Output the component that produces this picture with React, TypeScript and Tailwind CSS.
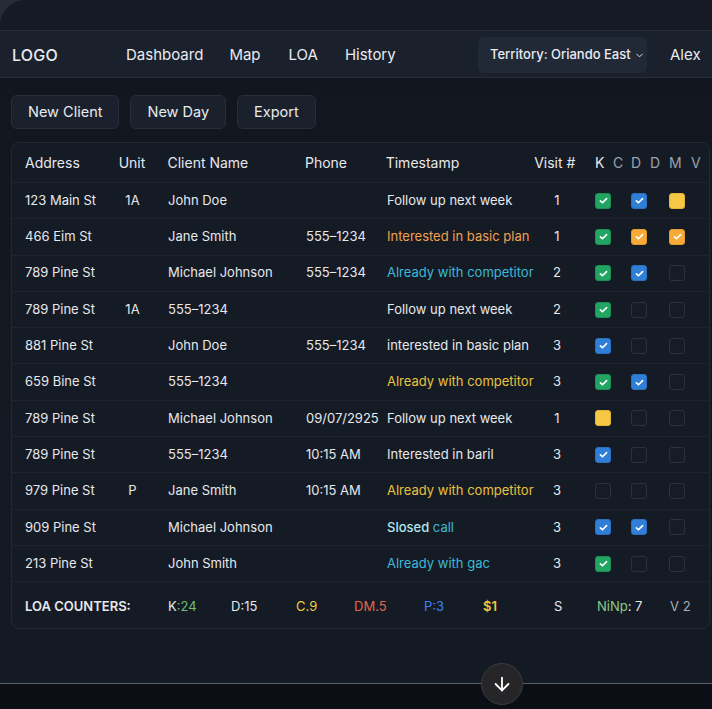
import { ArrowDown, ChevronDown } from 'lucide-react';

type Box = 'green' | 'blue' | 'orange' | 'yellowPlain' | 'none';

type Row = {
  address: string;
  unit?: string;
  name: string;
  phone?: string;
  note: React.ReactNode;
  visit: string;
  checks: [Box, Box, Box];
};

const white = 'text-[#e6e8ec]';

const ROWS: Row[] = [
  { address: '123 Main St', unit: '1A', name: 'John Doe', note: <span className={white}>Follow up next week</span>, visit: '1', checks: ['green', 'blue', 'yellowPlain'] },
  { address: '466 Eim St', name: 'Jane Smith', phone: '555–1234', note: <span className="text-[#f0a24e]">Interested in basic plan</span>, visit: '1', checks: ['green', 'orange', 'orange'] },
  { address: '789 Pine St', name: 'Michael Johnson', phone: '555–1234', note: <span className="text-[#3db9d6]">Already with competitor</span>, visit: '2', checks: ['green', 'blue', 'none'] },
  { address: '789 Pine St', unit: '1A', name: '555–1234', note: <span className={white}>Follow up next week</span>, visit: '2', checks: ['green', 'none', 'none'] },
  { address: '881 Pine St', name: 'John Doe', phone: '555–1234', note: <span className={white}>interested in basic plan</span>, visit: '3', checks: ['blue', 'none', 'none'] },
  { address: '659 Bine St', name: '555–1234', note: <span className="text-[#e8c23c]">Already with competitor</span>, visit: '3', checks: ['green', 'blue', 'none'] },
  { address: '789 Pine St', name: 'Michael Johnson', phone: '09/07/2925', note: <span className={white}>Follow up next week</span>, visit: '1', checks: ['yellowPlain', 'none', 'none'] },
  { address: '789 Pine St', name: '555–1234', phone: '10:15 AM', note: <span className={white}>Interested in baril</span>, visit: '3', checks: ['blue', 'none', 'none'] },
  { address: '979 Pine St', unit: 'P', name: 'Jane Smith', phone: '10:15 AM', note: <span className="text-[#e8c23c]">Already with competitor</span>, visit: '3', checks: ['none', 'none', 'none'] },
  {
    address: '909 Pine St',
    name: 'Michael Johnson',
    note: (
      <span>
        <span className="font-medium text-[#b4e6f1]">Slosed</span> <span className="text-[#3db9d6]">call</span>
      </span>
    ),
    visit: '3',
    checks: ['blue', 'blue', 'none'],
  },
  { address: '213 Pine St', name: 'John Smith', note: <span className="text-[#3db9d6]">Already with gac</span>, visit: '3', checks: ['green', 'none', 'none'] },
];

const BOX_STYLES: Record<Box, string> = {
  green: 'bg-[#22a462] border-[#1d8f55]',
  blue: 'bg-[#2f7ed8] border-[#2a6fc0]',
  yellowPlain: 'bg-[#f6c744] border-[#e2b437]',
  orange: 'bg-[#f6aa38] border-[#e39a2c]',
  none: 'bg-[#161c26] border-[#2b323e]',
};

function CheckBox({ kind }: { kind: Box }) {
  const checked = kind !== 'none' && kind !== 'yellowPlain';
  return (
    <span className={`flex h-[16px] w-[16px] items-center justify-center rounded-[3px] border ${BOX_STYLES[kind]}`}>
      {checked && (
        <svg viewBox="0 0 16 16" className="h-[11px] w-[11px]" fill="none" stroke="white" strokeWidth={2.4} strokeLinecap="round" strokeLinejoin="round">
          <path d="M3.5 8.5l3 2.8 6-6" />
        </svg>
      )}
    </span>
  );
}

function Checks({ checks }: { checks: [Box, Box, Box] }) {
  return (
    <div className="flex items-center pl-[17px]">
      <CheckBox kind={checks[0]} />
      <span className="w-[20px]" />
      <CheckBox kind={checks[1]} />
      <span className="w-[22px]" />
      <CheckBox kind={checks[2]} />
    </div>
  );
}

export default function App() {
  return (
    <div className="h-[709px] w-[712px] overflow-hidden bg-[#262c36] font-['Inter',sans-serif]">
      <div className="flex h-full flex-col rounded-tl-[26px] bg-[#131821]">
        <div className="h-[30px] shrink-0 rounded-tl-[26px] bg-[#151a24]" />

        {/* top bar */}
        <header className="flex h-[48px] shrink-0 items-center border-y border-[#262d3a] bg-[#1a212d] pt-[2px] text-[15px] text-[#e9ebef]">
          <div className="w-[126px] pl-[12px] text-[16px] font-medium tracking-[0.2px]">LOGO</div>
          <nav className="flex w-[352px] items-center">
            <a className="mr-[26px]">Dashboard</a>
            <a className="mr-[28px]">Map</a>
            <a className="mr-[27px]">LOA</a>
            <a>History</a>
          </nav>
          <div className="flex h-[36px] w-[169px] items-center rounded-md bg-[#212937] pl-[12px] text-[13px] font-medium">
            Territory: Oriando East
            <ChevronDown className="ml-[3px] h-[11px] w-[11px]" strokeWidth={2} />
          </div>
          <div className="ml-[23px]">Alex</div>
        </header>

        <div className="flex-1 bg-gradient-to-b from-[#12171f] to-[#141a24] px-[11px]">
          <div className="flex gap-[11px] pt-[17px]">
            {['New Client', 'New Day', 'Export'].map(label => (
              <button
                key={label}
                className="h-[34px] rounded-md border border-[#262e3b] bg-[#1a212c] px-[16px] text-[14.5px] text-[#e9ebef]"
              >
                {label}
              </button>
            ))}
          </div>

          <div className="mt-[13px] mr-[-9px] rounded-lg border border-[#212834] bg-[#151b25] text-[13px]">
            <div className="flex h-[39px] items-center whitespace-nowrap pl-[13px] text-[14px] text-[#e6e8ec]">
              <div className="w-[94px]">Address</div>
              <div className="w-[49px]">Unit</div>
              <div className="w-[138px]">Client Name</div>
              <div className="w-[81px]">Phone</div>
              <div className="w-[149px]">Timestamp</div>
              <div className="w-[42px]">Visit #</div>
              <div className="flex pl-[19px] text-[#9aa1ad]">
                <span className="w-[18px] text-[#e6e8ec]">K</span>
                <span className="w-[18px]">C</span>
                <span className="w-[19px]">D</span>
                <span className="w-[19px]">D</span>
                <span className="w-[22px]">M</span>
                <span className="w-[18px]">V</span>
              </div>
            </div>

            {ROWS.map((row, i) => (
              <div key={i} className="flex h-[36.3px] items-center whitespace-nowrap border-t border-[#1d2430] pl-[13px] text-[#e6e8ec]">
                <div className="w-[94px]">{row.address}</div>
                <div className="w-[49px] pr-[22px] text-center">{row.unit}</div>
                <div className="w-[138px]">{row.name}</div>
                <div className="w-[81px]">{row.phone}</div>
                <div className="w-[149px]">{row.note}</div>
                <div className="w-[42px] text-center">{row.visit}</div>
                <Checks checks={row.checks} />
              </div>
            ))}

            <div className="flex h-[47px] items-center whitespace-nowrap border-t border-[#1d2430] pl-[13px] pt-[3px] text-[13px]">
              <div className="w-[143px] font-semibold text-[#e6e8ec]">LOA COUNTERS:</div>
              <div className="w-[63px]">
                <span className="text-[#e6e8ec]">K</span>
                <span className="text-[#6fbf73]">:24</span>
              </div>
              <div className="w-[65px] text-[#e6e8ec]">D:15</div>
              <div className="w-[58px] text-[#f0c93f]">C.9</div>
              <div className="w-[70px] text-[#e0664b]">DM.5</div>
              <div className="w-[59px] text-[#3b82f6]">P:3</div>
              <div className="w-[71px] font-semibold text-[#f2c53d]">$1</div>
              <div className="w-[43px] text-[#e6e8ec]">S</div>
              <div className="w-[73px]">
                <span className="text-[#8fc98a]">NiNp</span>
                <span className="text-[#e6e8ec]">: 7</span>
              </div>
              <div className="text-[#a9afb9]">V 2</div>
            </div>
          </div>
        </div>

        <div className="relative h-[26px] shrink-0 border-t border-[#59606b] bg-[#0b0e14]">
          <div className="absolute left-[481px] top-[-21px] flex h-[42px] w-[42px] items-center justify-center rounded-full border border-[#3a3a3d] bg-[#262628]">
            <ArrowDown className="h-[22px] w-[22px] text-white" strokeWidth={2} />
          </div>
        </div>
      </div>
    </div>
  );
}
